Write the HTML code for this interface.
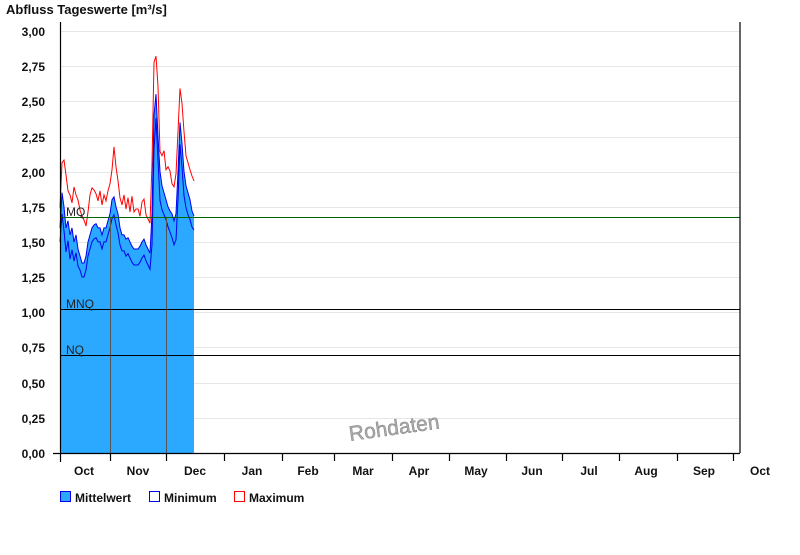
<!DOCTYPE html>
<html><head><meta charset="utf-8"><style>
body{margin:0;background:#fff;width:800px;height:550px;overflow:hidden;font-family:"Liberation Sans",Arial,sans-serif}
</style></head><body>
<svg width="800" height="550" xmlns="http://www.w3.org/2000/svg" font-family="Liberation Sans, Arial, sans-serif">
<text x="6" y="14" font-size="13" font-weight="bold" fill="#111">Abfluss Tageswerte [m³/s]</text>
<g stroke="#e6e6e6" stroke-width="1">
<line x1="60" x2="740" y1="31.5" y2="31.5"/><line x1="60" x2="740" y1="66.5" y2="66.5"/><line x1="60" x2="740" y1="101.5" y2="101.5"/><line x1="60" x2="740" y1="137.5" y2="137.5"/><line x1="60" x2="740" y1="172.5" y2="172.5"/><line x1="60" x2="740" y1="207.5" y2="207.5"/><line x1="60" x2="740" y1="242.5" y2="242.5"/><line x1="60" x2="740" y1="277.5" y2="277.5"/><line x1="60" x2="740" y1="312.5" y2="312.5"/><line x1="60" x2="740" y1="347.5" y2="347.5"/><line x1="60" x2="740" y1="383.5" y2="383.5"/><line x1="60" x2="740" y1="418.5" y2="418.5"/>
</g>
<g font-size="12" font-weight="bold" fill="#111" text-anchor="end">
<text x="45" y="36">3,00</text><text x="45" y="71">2,75</text><text x="45" y="106">2,50</text><text x="45" y="142">2,25</text><text x="45" y="177">2,00</text><text x="45" y="212">1,75</text><text x="45" y="247">1,50</text><text x="45" y="282">1,25</text><text x="45" y="317">1,00</text><text x="45" y="352">0,75</text><text x="45" y="388">0,50</text><text x="45" y="423">0,25</text><text x="45" y="458">0,00</text>
</g>
<polygon fill="#2ba8ff" points="60,453 60,227.9 62,192.7 64,206.8 66,227.9 68,220.8 70,234.9 72,227.9 74,242 76,234.9 78,249 80,256 82,263 84,263 86,256 88,242 90,234.9 92,227.9 94,225 96,223.7 98,227.9 100,227.9 102,234.9 104,227.9 106,227.9 108,220.8 110,213.8 112,199.7 114,196.9 116,206.8 118,213.8 120,227.9 122,234.9 124,234.9 126,239.1 128,237.7 130,242 132,246.2 134,249 136,249 138,249 140,246.2 142,242 144,239.1 146,244.8 148,249 150,253.2 152,213.8 154,115.3 156,94.2 158,136.4 160,171.6 162,185.7 164,192.7 166,199.7 168,206.8 170,211 172,213.8 174,220.8 176,213.8 178,171.6 180,122.4 182,143.5 184,171.6 186,185.7 188,192.7 190,199.7 192,211 194,216 194,453"/>
<polyline fill="none" stroke="#0000ee" stroke-width="1" points="60,227.9 62,192.7 64,206.8 66,227.9 68,220.8 70,234.9 72,227.9 74,242 76,234.9 78,249 80,256 82,263 84,263 86,256 88,242 90,234.9 92,227.9 94,225 96,223.7 98,227.9 100,227.9 102,234.9 104,227.9 106,227.9 108,220.8 110,213.8 112,199.7 114,196.9 116,206.8 118,213.8 120,227.9 122,234.9 124,234.9 126,239.1 128,237.7 130,242 132,246.2 134,249 136,249 138,249 140,246.2 142,242 144,239.1 146,244.8 148,249 150,253.2 152,213.8 154,115.3 156,94.2 158,136.4 160,171.6 162,185.7 164,192.7 166,199.7 168,206.8 170,211 172,213.8 174,220.8 176,213.8 178,171.6 180,122.4 182,143.5 184,171.6 186,185.7 188,192.7 190,199.7 192,211 194,216"/>
<polyline fill="none" stroke="#0000ee" stroke-width="1" transform="translate(0,14)" points="60,227.9 62,200 64,216.8 66,237.9 68,226.8 70,244.9 72,235.9 74,247 76,238.9 78,252 80,256 82,263 84,263 86,256 88,242 90,234.9 92,227.9 94,225 96,223.7 98,227.9 100,227.9 102,234.9 104,227.9 106,227.9 108,220.8 110,213.8 112,204.7 114,200.9 116,210.8 118,218.8 120,230.9 122,236.9 124,236.9 126,242.1 128,239.7 130,244 132,248.2 134,251 136,251 138,251 140,248.2 142,244 144,241.1 146,246.8 148,251 150,255.2 152,230.8 154,135.3 156,104.2 158,146.4 160,186.6 162,195.7 164,200.7 166,205.7 168,212.8 170,218 172,223.8 174,230.8 176,225.8 178,185.6 180,130.4 182,153.5 184,181.6 186,193.7 188,200.7 190,205.7 192,213 194,216"/>
<polyline fill="none" stroke="#ff0000" stroke-width="1" transform="translate(0,-20)" points="60,227.9 62,182.7 64,180 66,195 68,210.8 70,214.9 72,222.9 74,207 76,214.9 78,220 80,230 82,236 84,240 86,246 88,232 90,214.9 92,207.9 94,210 96,213.7 98,220.9 100,210.9 102,224.9 104,214.9 106,220.9 108,210.8 110,203.8 112,189.7 114,166.9 116,186.8 118,200.8 120,217.9 122,224.9 124,214.9 126,229.1 128,217.7 130,232 132,216.2 134,232 136,229 138,229 140,236.2 142,222 144,219.1 146,234.8 148,239 150,243.2 152,183.8 154,82.3 156,76.2 158,106.4 160,171.6 162,175.7 164,170.7 166,189.7 168,186.8 170,191 172,203.8 174,206.8 176,193.8 178,151.6 180,108.4 182,123.5 184,151.6 186,175.7 188,182.7 190,189.7 192,196 194,201"/>
<g stroke="#555" stroke-width="1"><line x1="110.5" x2="110.5" y1="218" y2="453"/><line x1="166.5" x2="166.5" y1="218" y2="453"/></g>
<line x1="60" x2="740" y1="217.5" y2="217.5" stroke="#006400" stroke-width="1"/>
<line x1="60" x2="740" y1="309.5" y2="309.5" stroke="#000" stroke-width="1"/>
<line x1="60" x2="740" y1="355.5" y2="355.5" stroke="#000" stroke-width="1"/>
<g font-size="12" fill="#222"><text x="66" y="216">MQ</text><text x="66" y="308">MNQ</text><text x="66" y="354">NQ</text></g>
<g stroke="#000" stroke-width="1.2" fill="none">
<line x1="60.5" x2="60.5" y1="22" y2="462"/><line x1="740" x2="740" y1="22" y2="453"/>
<line x1="53" x2="740" y1="453.5" y2="453.5"/>
<line x1="110.5" x2="110.5" y1="453" y2="461"/><line x1="166.5" x2="166.5" y1="453" y2="461"/><line x1="224.5" x2="224.5" y1="453" y2="461"/><line x1="282.5" x2="282.5" y1="453" y2="461"/><line x1="334.5" x2="334.5" y1="453" y2="461"/><line x1="392.5" x2="392.5" y1="453" y2="461"/><line x1="449.5" x2="449.5" y1="453" y2="461"/><line x1="506.5" x2="506.5" y1="453" y2="461"/><line x1="562.5" x2="562.5" y1="453" y2="461"/><line x1="619.5" x2="619.5" y1="453" y2="461"/><line x1="677.5" x2="677.5" y1="453" y2="461"/><line x1="733.5" x2="733.5" y1="453" y2="461"/>
</g>
<g font-size="12" font-weight="bold" fill="#111" text-anchor="middle">
<text x="84" y="475">Oct</text><text x="138" y="475">Nov</text><text x="195" y="475">Dec</text><text x="252" y="475">Jan</text><text x="308" y="475">Feb</text><text x="363" y="475">Mar</text><text x="419" y="475">Apr</text><text x="476" y="475">May</text><text x="532" y="475">Jun</text><text x="589" y="475">Jul</text><text x="646" y="475">Aug</text><text x="704" y="475">Sep</text><text x="760" y="475">Oct</text>
</g>
<text x="350" y="441" font-size="21" fill="#aaa" stroke="#777" stroke-width="0.4" transform="rotate(-8 350 441)">Rohdaten</text>
<rect x="60.5" y="491.5" width="10" height="10" fill="#2ba8ff" stroke="#0000ee"/>
<rect x="149.5" y="491.5" width="10" height="10" fill="#fff" stroke="#0000ee"/>
<rect x="234.5" y="491.5" width="10" height="10" fill="#fff" stroke="#ff0000"/>
<g font-size="12" font-weight="bold" fill="#111"><text x="75" y="502">Mittelwert</text><text x="164" y="502">Minimum</text><text x="249" y="502">Maximum</text></g>
</svg>
</body></html>
